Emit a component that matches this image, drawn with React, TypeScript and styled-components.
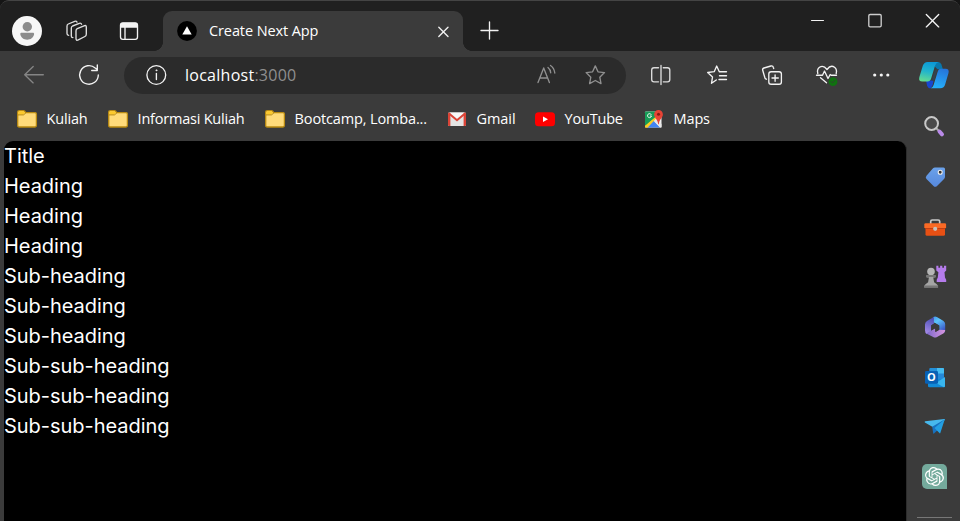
import React from "react";
import styled, { createGlobalStyle } from "styled-components";
import { SiOpenai } from "react-icons/si";

const GlobalStyle = createGlobalStyle`
  *, *::before, *::after { box-sizing: border-box; }
  html, body { margin: 0; background: #151515; overflow: hidden; }
  svg { display: block; flex: none; overflow: visible; }
`;

const uiFont = `"Open Sans", "Noto Sans", sans-serif`;

const Window = styled.div`
  width: 960px;
  height: 521px;
  display: flex;
  flex-direction: column;
  overflow: hidden;
  background: #3b3b3b;
  border-top: 1px solid #444444;
  border-radius: 9px 9px 0 0;
  font-family: ${uiFont};
  color: #ffffff;
`;

const TitleBar = styled.header`
  height: 50px;
  flex: none;
  display: flex;
  align-items: flex-start;
  background: #202020;
  padding: 0 16px 0 12px;
`;

const TabTools = styled.div`
  display: flex;
  align-items: center;
  margin-top: 15px;
  width: 151px;
  height: 30px;
`;

const ToolIcon = styled.svg<{ $before?: number; $top?: number; $tone?: string; $solid?: boolean }>`
  width: 24px;
  height: 24px;
  margin-left: ${(p) => p.$before ?? 0}px;
  margin-top: ${(p) => p.$top ?? 0}px;
  fill: ${(p) => (p.$solid ? p.$tone ?? "#f5f5f5" : "none")};
  stroke: ${(p) => (p.$solid ? "none" : p.$tone ?? "#f2f2f2")};
  stroke-width: 1.35;
  stroke-linecap: round;
  stroke-linejoin: round;
`;

const Tab = styled.div`
  position: relative;
  width: 300px;
  height: 40px;
  margin-top: 10px;
  padding: 0 8px 0 14px;
  display: flex;
  align-items: center;
  background: #3b3b3b;
  border-radius: 9px 9px 0 0;

  &::before,
  &::after {
    content: "";
    position: absolute;
    bottom: 0;
    width: 9px;
    height: 9px;
  }
  &::before {
    left: -9px;
    background: radial-gradient(circle at 0 0, transparent 8.6px, #3b3b3b 9.2px);
  }
  &::after {
    right: -9px;
    background: radial-gradient(circle at 100% 0, transparent 8.6px, #3b3b3b 9.2px);
  }
`;

const TabTitle = styled.span`
  flex: 1;
  margin-left: 12px;
  font-size: 14.5px;
  line-height: 20px;
  letter-spacing: -0.1px;
  white-space: nowrap;
`;

const WindowControls = styled.div`
  display: flex;
  gap: 33px;
  margin: 8px 0 0 auto;
`;

const Toolbar = styled.nav`
  height: 48px;
  flex: none;
  display: flex;
  align-items: center;
  padding: 0 10px 0 22px;
`;

const ButtonGroup = styled.div<{ $end?: boolean }>`
  display: flex;
  gap: 31px;
  margin-left: ${(p) => (p.$end ? "auto" : "0")};
`;

const AddressBar = styled.div`
  width: 502px;
  height: 37px;
  margin: 0 23px;
  display: flex;
  align-items: center;
  padding: 0 19px 0 20px;
  border-radius: 19px;
  background: #2b2b2b;
`;

const Url = styled.span`
  flex: 1;
  margin-left: 17px;
  font-size: 16px;
  line-height: 22px;
  letter-spacing: 0.26px;
`;

const Port = styled.span`
  color: #8f8f8f;
`;

const Bookmarks = styled.div`
  height: 39px;
  flex: none;
  display: flex;
  align-items: center;
  padding-left: 16px;
`;

const Bookmark = styled.div<{ $width: number }>`
  width: ${(p) => p.$width}px;
  display: flex;
  align-items: center;
  gap: 8.6px;
  font-size: 14.5px;
  line-height: 20px;
  white-space: nowrap;
`;

const BookmarkLabel = styled.span<{ $track: number }>`
  letter-spacing: ${(p) => p.$track}px;
`;

const Body = styled.div`
  flex: 1;
  display: flex;
  min-height: 0;
  padding-left: 4px;
`;

const Page = styled.main`
  width: 903px;
  margin-top: 3px;
  background: #000000;
  border-right: 1px solid #2c2c2c;
  border-radius: 9px 9px 0 0;
  font-family: Inter, sans-serif;
  font-size: 20px;
  line-height: 30px;
  letter-spacing: -0.03px;
`;

const Line = styled.div`
  white-space: nowrap;
`;

const Sidebar = styled.aside`
  flex: 1;
  display: flex;
  flex-direction: column;
  align-items: center;
  margin-top: -25px;
  padding-left: 3px;
  gap: 22px;
`;

const Divider = styled.div`
  width: 35px;
  height: 1px;
  flex: none;
  margin: 4px 2px 0 0;
  background: #777777;
`;

const SideSvg = styled.svg`
  width: 28px;
  height: 28px;
`;

const ChatTile = styled.div`
  width: 25px;
  height: 25px;
  margin: 1px 0 2px -1px;
  flex: none;
  display: flex;
  align-items: center;
  justify-content: center;
  border-radius: 5px 5px 0 5px;
  background: #74aa9c;
`;

const Avatar = () => (
  <svg width="30" height="30" viewBox="0 0 30 30">
    <circle cx="15" cy="15" r="15" fill="#f7f7f7" />
    <circle cx="15.3" cy="10.8" r="4.7" fill="#8c8c8c" />
    <path d="M9.6 16.8h11.2c1 0 1.5.6 1.3 1.5-.7 3.6-3.500 5.400-6.900 5.400s-6.200-1.800-6.900-5.400c-.2-.9.3-1.500 1.300-1.500z" fill="#8c8c8c" />
  </svg>
);

const Folder = () => (
  <svg width="22" height="20" viewBox="0 0 22 20">
    <path d="M1.700 3.200q0-1.500 1.500-1.500h4.200q.9 0 1.500.8l.8 1.100h9.300q1.400 0 1.400 1.400v11.600q0 1.400-1.400 1.400H3.200q-1.500 0-1.500-1.500z" fill="#ffdb7a" stroke="#b98a12" strokeWidth="1.300" />
    <path d="M2.300 5.600V3.400q0-1.100 1.100-1.100h3.900q.7 0 1.100.6l.6.900-1 1.200q-.5.600-1.300.6z" fill="#fcc92c" />
    <path d="M2 5.900h5.300q.7 0 1.200-.6l1.200-1.500" fill="none" stroke="#b98a12" strokeWidth="1" />
  </svg>
);

const Gmail = () => (
  <svg width="22" height="20" viewBox="0 0 22 20">
    <rect x="2" y="3.500" width="18" height="13.500" rx="1.300" fill="#e4e4e4" />
    <path d="M2 16V4.800q0-1.300 1.300-1.300L4.400 4v13H3q-1 0-1-1zM20 16V4.800q0-1.300-1.300-1.300L17.600 4v13H19q1 0 1-1z" fill="#db4437" />
    <path d="M3.500 3.500h15L11 10z" fill="#f8f8f8" />
    <path d="M3 4.600 11 11.300l8-6.700" fill="none" stroke="#db4437" strokeWidth="2" />
  </svg>
);

const YouTube = () => (
  <svg width="22" height="20" viewBox="0 0 22 20">
    <rect x="1" y="3.300" width="20" height="14" rx="3.500" fill="#ff0000" />
    <path d="M9 7.500v5.600l5-2.800z" fill="#ffffff" />
  </svg>
);

const Maps = () => (
  <svg width="22" height="20" viewBox="0 0 22 20">
    <rect x="2" y="2.500" width="16.500" height="16" rx="1" fill="#f2f2f2" />
    <path d="M2 3.500q0-1 1-1h10v5.500L2 17.500z" fill="#179c57" />
    <path d="m2 16.800 12-10 2.300 2.300L4.800 18.500H2z" fill="#fbcd20" />
    <path d="M4.700 18.500 10.800 12l6.300 6.500z" fill="#4285f4" />
    <path d="M10.800 12 13 9.500l5.500 5.400v3.600h-1.400z" fill="#e8e8e8" />
    <path d="M8.300 5.700A2 2 0 1 0 8.500 7H6.900" fill="none" stroke="#ffffff" strokeWidth=".9" />
    <path d="M15.500 1a4.400 4.400 0 0 1 4.400 4.400c0 3.200-3.400 4.400-4 9.300-.1.700-.7.700-.8 0-.6-4.900-4-6.100-4-9.300A4.400 4.400 0 0 1 15.500 1z" fill="#e74335" />
    <circle cx="15.500" cy="5.300" r="1.500" fill="#861c14" />
  </svg>
);

const Copilot = () => (
  <svg width="32" height="32" viewBox="0 0 32 32">
    <defs>
      <linearGradient id="cpA" x1="0.600" y1="0" x2="0.400" y2="1">
        <stop offset="0" stopColor="#0b98d6" />
        <stop offset=".5" stopColor="#22b4cc" />
        <stop offset="1" stopColor="#62da92" />
      </linearGradient>
      <linearGradient id="cpB" x1="0.700" y1="0" x2="0.400" y2="1">
        <stop offset="0" stopColor="#2674d9" />
        <stop offset="1" stopColor="#25b0fb" />
      </linearGradient>
    </defs>
    <path d="M17 3h3.300q2.300 0 3.100 2.500l1.500 4.700h-5.400l-3-3z" fill="#0878ad" />
    <path d="M8 21.500h7.500l-.8 4.500-2.200 3.500q-2.500 0-3.400-2.700z" fill="#1747cf" />
    <path d="M9.700 3h10.800q-2.500.5-3.500 3.700l-3.800 12.600q-1 3.200-3.800 3.200H4.300q-4 0-3-4.300L4.800 6.800Q6 3 9.700 3z" fill="url(#cpA)" />
    <path d="M22.800 9.700h4.700q4 0 3 4.300l-3.300 11.300q-1 4-5 4h-9.500q2-.5 2.900-3.300l4-13q1-3.300 3.200-3.300z" fill="url(#cpB)" />
    <path d="m16.600 12 1-1.600h2.300q-.6.800-1 2l-2.500 8.300q-.3.900-1.400.9h-1.200z" fill="#33434d" />
  </svg>
);

const SearchIcon = () => (
  <SideSvg viewBox="0 0 28 28">
    <path d="m15.500 15.500 2.500 2.500" stroke="#aaa" strokeWidth="2" />
    <path d="m18.500 18.500 2.500 2.800" stroke="#b98ae8" strokeWidth="4" strokeLinecap="round" />
    <circle cx="10.600" cy="10.500" r="6.400" fill="#4a4a4a" stroke="#c8c8c8" strokeWidth="2" />
  </SideSvg>
);

const TagIcon = () => (
  <SideSvg viewBox="0 0 28 28">
    <defs>
      <linearGradient id="tag" x1="0" y1="0" x2="0" y2="1">
        <stop offset="0" stopColor="#6ba2ea" />
        <stop offset="1" stopColor="#5688dc" />
      </linearGradient>
    </defs>
    <path d="M14 4.500h8.500q1.500 0 1.500 1.500v7.500q0 1.500-1 2.500l-7 7q-1.800 1.700-3.500 0l-7-7q-1.500-1.500 0-3.200l6.300-7.300q.9-1 2.200-1z" fill="url(#tag)" />
    <circle cx="19.200" cy="9.300" r="2" fill="#343434" stroke="#eeeeee" strokeWidth="1.100" />
  </SideSvg>
);

const ToolboxIcon = () => (
  <SideSvg viewBox="0 0 28 28">
    <path d="M9.700 11V8.500q0-1.500 1.500-1.500h6q1.500 0 1.500 1.500V11" fill="none" stroke="#c9c9c9" strokeWidth="1.700" />
    <path d="M4.500 13h19.500v8.300q0 1.500-1.500 1.500H6q-1.500 0-1.500-1.500z" fill="#e85014" />
    <path d="M3.300 11.500q0-1.300 1.300-1.300h19.200q1.300 0 1.300 1.300V15H3.300z" fill="#fa6a25" />
    <path d="M4 15.500h20.500" stroke="#b93c12" strokeWidth=".8" />
    <circle cx="14.200" cy="15.800" r="2.100" fill="#c8c0ba" />
  </SideSvg>
);

const GamesIcon = () => (
  <SideSvg viewBox="0 0 28 28">
    <path d="M15.300 2.700h2.100v2h1.700v-2h2.200v2H23v-2h2.200v4.800l-1.700 1.700.5 5.300 1.200 2.200V19h-9.500v-2.300l1.100-2.200.6-5.300-2.100-1.700z" fill="#b57cec" />
    <circle cx="10" cy="8.500" r="3.800" fill="#b6b6b6" />
    <path d="M5.500 12.500h9v2h-2.200l.8 4.700 2.700 2q1.300 1 1.300 3.300H3.200q0-2.300 1.300-3.300l2.600-2 .8-4.700H5.500z" fill="#a4a4a4" />
    <path d="M5.200 13h9.600M3.300 23.500h13.800" stroke="#777" strokeWidth="1.800" />
  </SideSvg>
);

const M365Icon = () => (
  <SideSvg viewBox="0 0 28 28">
    <defs>
      <linearGradient id="m1" x1="0.600" y1="0" x2="0.400" y2="1">
        <stop offset="0" stopColor="#4a4fb5" />
        <stop offset="1" stopColor="#a58be6" />
      </linearGradient>
      <linearGradient id="m2" x1="0" y1="0" x2="0.600" y2="1">
        <stop offset="0" stopColor="#3f8fe8" />
        <stop offset=".4" stopColor="#5cc4fb" />
        <stop offset="1" stopColor="#3a53c5" />
      </linearGradient>
      <linearGradient id="m3" x1="0" y1="0" x2="1" y2="0">
        <stop offset="0" stopColor="#7b68cc" />
        <stop offset="1" stopColor="#d795de" />
      </linearGradient>
    </defs>
    <path d="M12.300 4q1.800-1 3.600 0l6.600 3.900q1.700 1.200 1.700 3.400v6.200q-.2 1.900-1.800 2.800l-4.300-2.500v-5.300l-8-4.800z" fill="url(#m2)" />
    <path d="M4 11.600q0-2.300 2-3.500l6.900-4.100v6.700l-2.700 1.600v6.200l-4.500 2.600Q4 19.600 4 17.400z" fill="url(#m1)" />
    <path d="m5.200 20.500 9-5.200.2 3.600 3.900-2.200 5.900.2q0 2.300-1.900 3.500l-6.300 3.600q-2 1.100-3.800 0z" fill="url(#m3)" />
    <path d="m12.900 10.700 1.100-.6 4.300 2.500v4.200l-3.900 2.100-.2-3.600-4 2.300v-5.300z" fill="#3b3b3b" />
  </SideSvg>
);

const OutlookLetter = styled.text`
  font-family: "Open Sans", sans-serif;
  font-size: 11px;
  font-weight: 700;
  text-anchor: middle;
  fill: #ffffff;
`;

const OutlookIcon = () => (
  <SideSvg viewBox="0 0 28 28">
    <rect x="8.500" y="5" width="14.500" height="17" rx="1" fill="#1676cc" />
    <path d="M15.700 5H22q1 0 1 1v6h-7.300z" fill="#45bcf0" />
    <path d="M8.500 6q0-1 1-1h6.200v4H8.500z" fill="#2490d8" />
    <path d="M15.700 10.500H23v6h-7.300z" fill="#2589d8" />
    <path d="M7 16h17v7q0 1.300-1.300 1.300H8.300Q7 24.300 7 23z" fill="#128ad7" />
    <path d="m24 14-9 6 8 4.200q1-.2 1-1.200z" fill="#39b5ee" />
    <rect x="4" y="8" width="13" height="12.800" rx="1.300" fill="#0861b5" />
    <OutlookLetter x="10.500" y="18.300">O</OutlookLetter>
  </SideSvg>
);

const DropIcon = () => (
  <SideSvg viewBox="0 0 28 28">
    <path d="M4.200 8.200 23.300 6q1-.1.500.9L12.200 14.200l-8.300-4.700q-.7-.9.300-1.300z" fill="#47b9ed" />
    <path d="m23.800 6.200-12.600 7.500 1 6.600q.2.800.8.300l3.200-3.200z" fill="#1872c0" />
    <path d="m23.800 6.200-10.300 8.900 4.900 5q.7.700 1-.3z" fill="#239fe2" />
  </SideSvg>
);

const bookmarks = [
  { label: "Kuliah", icon: <Folder />, width: 91, track: -0.2 },
  { label: "Informasi Kuliah", icon: <Folder />, width: 157, track: -0.22 },
  { label: "Bootcamp, Lomba...", icon: <Folder />, width: 182, track: -0.14 },
  { label: "Gmail", icon: <Gmail />, width: 88, track: -0.1 },
  { label: "YouTube", icon: <YouTube />, width: 109, track: -0.2 },
  { label: "Maps", icon: <Maps />, width: 80, track: -0.15 },
];

const lines = [
  "Title",
  "Heading",
  "Heading",
  "Heading",
  "Sub-heading",
  "Sub-heading",
  "Sub-heading",
  "Sub-sub-heading",
  "Sub-sub-heading",
  "Sub-sub-heading",
];

export default function App() {
  return (
    <>
      <GlobalStyle />
      <Window>
        <TitleBar>
          <TabTools>
            <Avatar />
            <ToolIcon viewBox="0 0 24 24" $before={23} $tone="#dedede">
              <path d="m12.300 9.700 6.700-2.900q2.300-.9 2.300 1.300v7.200q0 1.500-1.400 2.200l-6.600 3.400q-2.300 1-2.300-1.300v-7.700q0-1.600 1.300-2.200z" />
              <path d="M7.900 18.600q-1.600 0-1.600-1.700V9.200q0-1.600 1.300-2.200l6.700-2.700q1.700-.6 2.300.9" />
              <path d="M3.700 16.300Q2 16.200 2 14.600V7.200Q2 5.600 3.300 5L9.700 2.300q1.600-.6 2.300.8" />
            </ToolIcon>
            <ToolIcon viewBox="0 0 24 24" $before={28}>
              <rect x="3.500" y="4" width="17" height="16.300" rx="2.300" />
              <path d="M4 8V6.300q0-1.800 1.800-1.800h12.400Q20 4.500 20 6.300V8z" fill="#f2f2f2" />
              <path d="M8 8.500v11.500" />
            </ToolIcon>
          </TabTools>
          <Tab>
            <svg width="20" height="20" viewBox="0 0 20 20">
              <circle cx="10" cy="10" r="9.900" fill="#000000" />
              <path d="m10 5.200 4.700 8.300H5.300z" fill="#ffffff" />
            </svg>
            <TabTitle>Create Next App</TabTitle>
            <ToolIcon viewBox="0 0 24 24">
              <path d="m7.800 8.300 9.200 9.200m0-9.200-9.200 9.200" />
            </ToolIcon>
          </Tab>
          <ToolIcon viewBox="0 0 24 24" $before={14} $top={18}>
            <path d="M4 11.500h17M12.500 3v17" />
          </ToolIcon>
          <WindowControls>
            <ToolIcon viewBox="0 0 24 24">
              <path d="M5.500 11.500h12" strokeWidth="1" />
            </ToolIcon>
            <ToolIcon viewBox="0 0 24 24" $tone="#cccccc">
              <rect x="5.800" y="5.500" width="12.400" height="12.400" rx="1.300" />
            </ToolIcon>
            <ToolIcon viewBox="0 0 24 24">
              <path d="m6.300 5.500 12.400 12.400m0-12.400L6.300 17.900" />
            </ToolIcon>
          </WindowControls>
        </TitleBar>

        <Toolbar>
          <ButtonGroup>
            <ToolIcon viewBox="0 0 24 24" $tone="#858585">
              <path d="M21.300 11.700H2.800m8.400-8.300-8.500 8.300 8.500 8.200" />
            </ToolIcon>
            <ToolIcon viewBox="0 0 24 24">
              <path d="M21.300 12A9.300 9.300 0 1 1 18.200 5l1.900 1.600M20.300 2v5.500h-5.600" />
            </ToolIcon>
          </ButtonGroup>
          <AddressBar>
            <ToolIcon viewBox="0 0 24 24">
              <circle cx="12.300" cy="12" r="9.400" />
              <path d="M12.400 10.500v6" />
              <circle cx="12.400" cy="7.300" r=".6" fill="#f2f2f2" strokeWidth=".6" />
            </ToolIcon>
            <Url>
              localhost<Port>:3000</Port>
            </Url>
            <ToolIcon viewBox="0 0 24 24" $tone="#8f8f8f">
              <path d="m4 19.500 5.700-14.500 5.700 14.500M5.800 15h7.800" />
              <path d="M14 4.500q2.500 2 2.700 5.300M16.500 2.500q3.700 2.500 4.300 7.500" />
            </ToolIcon>
            <ToolIcon viewBox="0 0 24 24" $before={25} $tone="#8f8f8f">
              <path d="m12.300 2.900 2.700 5.900 6.500.8-4.700 4.600 1.200 6.400-5.700-3.100-5.700 3.100 1.200-6.400-4.700-4.600 6.500-.8z" />
            </ToolIcon>
          </AddressBar>
          <ButtonGroup>
            <ToolIcon viewBox="0 0 24 24" $tone="#dcdcdc">
              <path d="M9.500 4.700H5Q2.700 4.700 2.700 7v9.500q0 2.300 2.300 2.300h4.500M14.300 4.700h4.200q2.300 0 2.300 2.300v9.500q0 2.300-2.300 2.300h-4.200M12 2.500v19" />
            </ToolIcon>
            <ToolIcon viewBox="0 0 24 24">
              <path d="m12.300 17-4.800 3.300 1-6.300-4.800-4.500 6.500-.8L12.700 3l2.600 5.700h7.200M15.500 12.700h7M15 16.500h7.500" />
            </ToolIcon>
            <ToolIcon viewBox="0 0 24 24">
              <rect x="9.800" y="8.700" width="12.600" height="12.500" rx="2.300" />
              <path d="M16.100 12v6.200M13 15h6.300M14.700 5.500l-.4-1.200q-.5-1.800-2.400-1.300L5 5Q3.200 5.500 3.700 7.300l2.200 7.500q.2 1 1.500 1.400" />
            </ToolIcon>
            <ToolIcon viewBox="0 0 24 24">
              <path d="M3.800 10.500Q2.700 6.500 5.500 4.300c2.600-1.800 5.500-.5 7.500 2.200 2-2.700 5-4 7.500-2.200q2.800 2.200 1.700 6.200" />
              <path d="M2.500 12.200h6l2-4.200 3.500 7.500 2.200-4 1 .7h5.300M6.500 14.800l6 5" />
              <circle cx="19" cy="18.700" r="4.400" fill="#0f720f" stroke="none" />
              <path d="m17.100 18.600 1.300 1.300 2.500-2.500" stroke="#323d32" strokeWidth="1" />
            </ToolIcon>
            <ToolIcon viewBox="0 0 24 24" $solid>
              <circle cx="5.700" cy="12" r="1.600" />
              <circle cx="12.300" cy="12" r="1.600" />
              <circle cx="18.800" cy="12" r="1.600" />
            </ToolIcon>
          </ButtonGroup>
          <ButtonGroup $end>
            <Copilot />
          </ButtonGroup>
        </Toolbar>

        <Bookmarks>
          {bookmarks.map((b) => (
            <Bookmark key={b.label} $width={b.width}>
              {b.icon}
              <BookmarkLabel $track={b.track}>{b.label}</BookmarkLabel>
            </Bookmark>
          ))}
        </Bookmarks>

        <Body>
          <Page>
            {lines.map((text, i) => (
              <Line key={i}>{text}</Line>
            ))}
          </Page>
          <Sidebar>
            <SearchIcon />
            <TagIcon />
            <ToolboxIcon />
            <GamesIcon />
            <M365Icon />
            <OutlookIcon />
            <DropIcon />
            <ChatTile>
              <SiOpenai size={19} color="#ffffff" />
            </ChatTile>
            <Divider />
          </Sidebar>
        </Body>
      </Window>
    </>
  );
}
